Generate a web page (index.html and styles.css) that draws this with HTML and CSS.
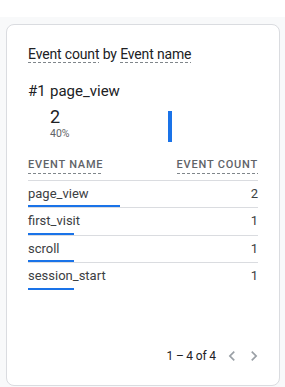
FILE: index.html
```html
<!DOCTYPE html>
<html>
<head>
<meta charset="utf-8">
<link rel="stylesheet" href="styles.css">
</head>
<body>
<div class="top"></div>
<div class="page">
  <div class="card">
    <div class="title"><span class="dash">Event count</span> by <span class="dash">Event name</span></div>
    <div class="headline"><span class="rank">#1</span><span>page_view</span></div>
    <div class="stats">
      <div class="value-col">
        <div class="value">2</div>
        <div class="pct">40%</div>
      </div>
      <div class="vbar"></div>
    </div>
    <div class="thead">
      <span class="dash">EVENT NAME</span>
      <span class="dash">EVENT COUNT</span>
    </div>
    <div class="row">
      <div class="cells"><span>page_view</span><span>2</span></div>
      <div class="bar" style="width:92px"></div>
    </div>
    <div class="row">
      <div class="cells"><span>first_visit</span><span>1</span></div>
      <div class="bar" style="width:46px"></div>
    </div>
    <div class="row">
      <div class="cells"><span>scroll</span><span>1</span></div>
      <div class="bar" style="width:46px"></div>
    </div>
    <div class="row last">
      <div class="cells"><span>session_start</span><span>1</span></div>
      <div class="bar" style="width:46px"></div>
    </div>
    <div class="pager">
      <span class="range">1 – 4 of 4</span>
      <svg class="chev" viewBox="0 0 24 24" width="20" height="20"><path d="M15.41 7.41L14 6l-6 6 6 6 1.41-1.41L10.83 12z" fill="currentColor"/></svg>
      <svg class="chev" viewBox="0 0 24 24" width="20" height="20"><path d="M8.59 16.59L10 18l6-6-6-6-1.41 1.41L13.17 12z" fill="currentColor"/></svg>
    </div>
  </div>
</div>
</body>
</html>
```

FILE: styles.css
```css
html, body {
  margin: 0;
  padding: 0;
  background: #ffffff;
  font-family: Roboto, "Liberation Sans", sans-serif;
  color: #202124;
}
.top {
  height: 17px;
}
.page {
  background: #f8f9fa;
  height: 370px;
  padding: 7px 5px 0 6px;
  box-sizing: border-box;
}
.card {
  box-sizing: border-box;
  width: 274px;
  height: 362px;
  border: 1px solid #dadce0;
  border-radius: 8px;
  background: #ffffff;
  padding: 19px 21px 19px 21px;
  display: flex;
  flex-direction: column;
}
.dash {
  padding-bottom: 1px;
  background-image: linear-gradient(to right, #80868b 60%, transparent 60%);
  background-size: 5px 1px;
  background-repeat: repeat-x;
  background-position: left bottom;
}
.title {
  font-size: 14px;
  line-height: 20px;
  letter-spacing: -0.15px;
  color: #202124;
}
.headline {
  margin-top: 17px;
  font-size: 15px;
  line-height: 20px;
  color: #202124;
  display: flex;
}
.rank {
  width: 22px;
}
.stats {
  margin-top: 5px;
  display: flex;
  padding-left: 22px;
}
.value-col {
  width: 118px;
}
.value {
  font-size: 18px;
  line-height: 22px;
  color: #202124;
}
.pct {
  font-size: 10.5px;
  line-height: 12px;
  color: #5f6368;
}
.vbar {
  width: 4px;
  height: 31px;
  margin-top: 5px;
  background: #1a73e8;
}
.thead {
  margin-top: 15px;
  height: 23px;
  border-bottom: 1px solid #dadce0;
  display: flex;
  justify-content: space-between;
  align-items: flex-start;
  font-size: 11px;
  font-weight: 500;
  line-height: 16px;
  letter-spacing: 0.8px;
  color: #5f6368;
}
.row {
  height: 26.4px;
  border-bottom: 1px solid #dadce0;
  display: flex;
  flex-direction: column;
  justify-content: space-between;
}
.row.last {
  border-bottom: none;
}
.cells {
  padding-top: 5px;
  display: flex;
  justify-content: space-between;
  font-size: 13px;
  line-height: 16px;
  color: #3c4043;
}
.bar {
  height: 2px;
  background: #1a73e8;
}
.pager {
  margin-top: auto;
  margin-right: -6px;
  height: 20px;
  display: flex;
  justify-content: flex-end;
  align-items: center;
  font-size: 12px;
  line-height: 20px;
  color: #202124;
}
.range {
  margin-right: 6px;
  word-spacing: -0.4px;
}
.chev {
  color: #9aa0a6;
  display: block;
}
.chev + .chev {
  margin-left: 2px;
}
```
